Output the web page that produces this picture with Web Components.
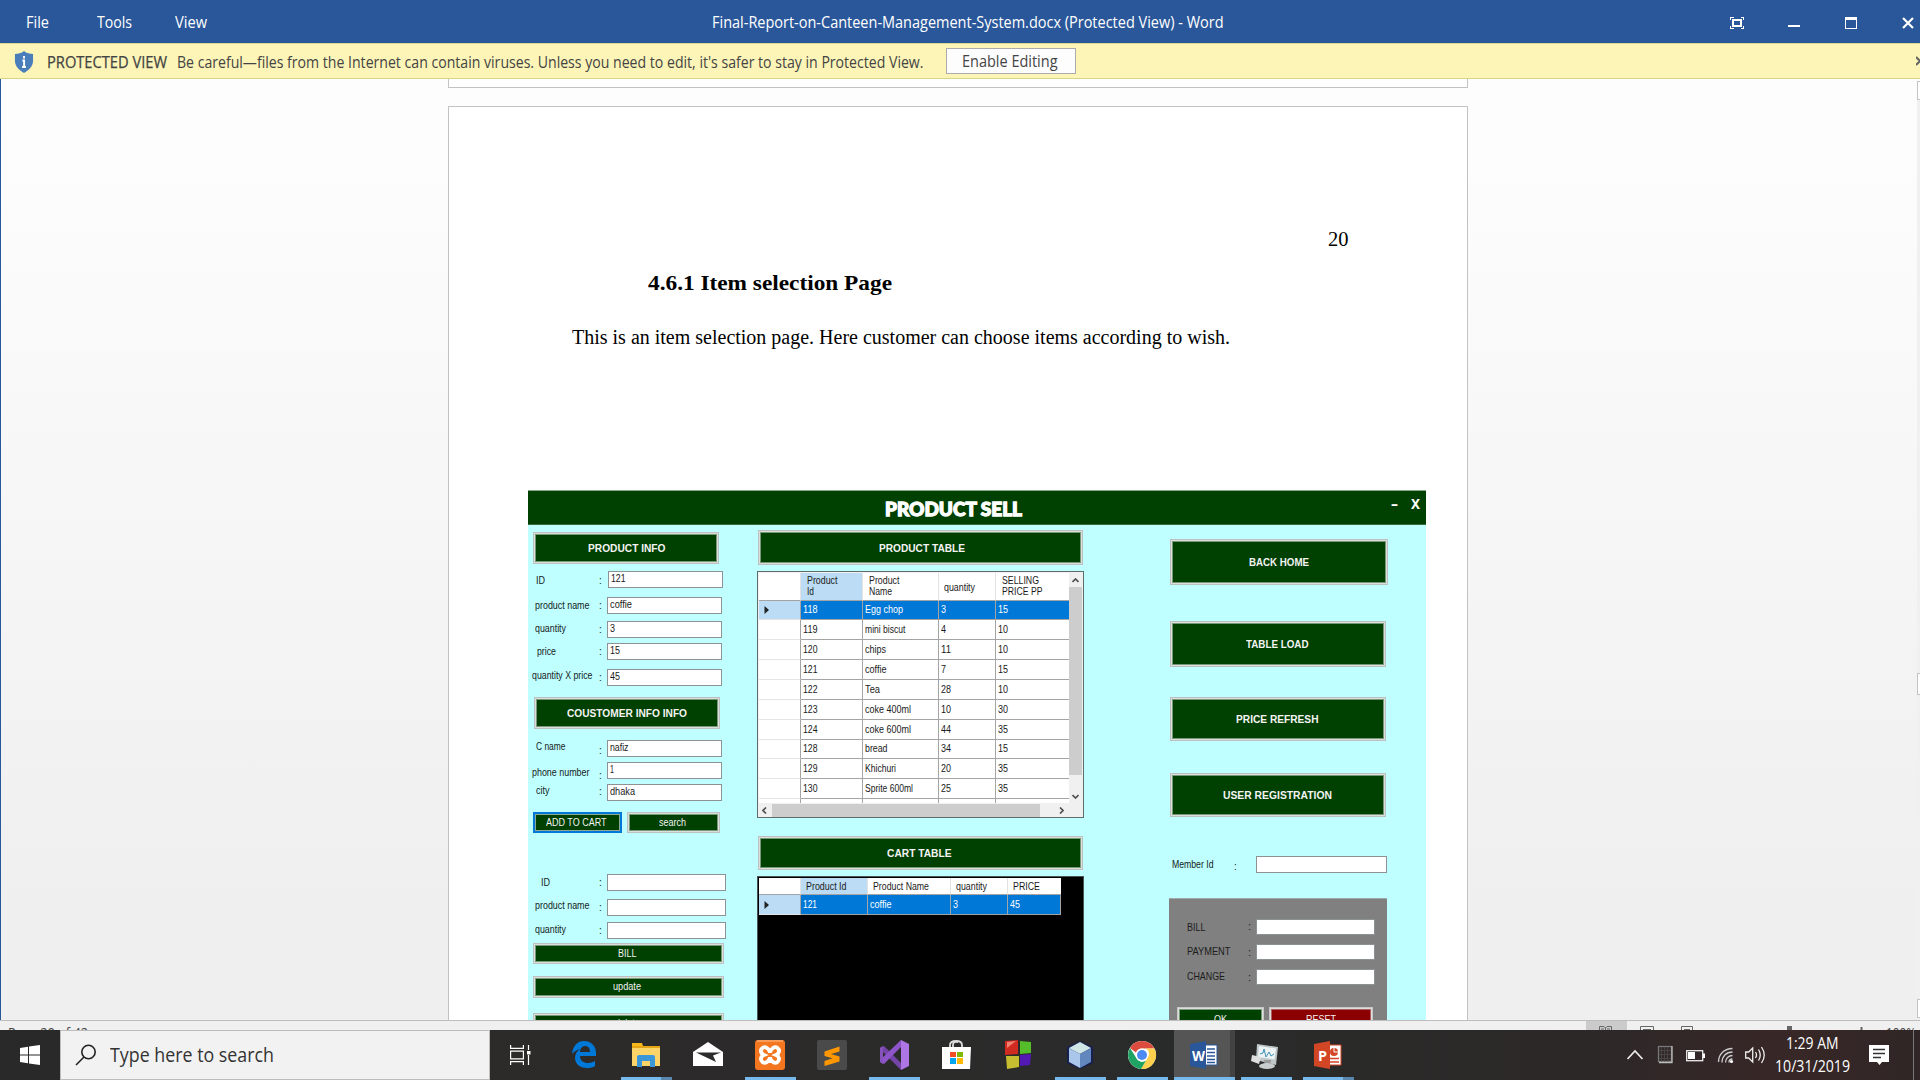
<!DOCTYPE html>
<html lang="en">
<head>
<meta charset="utf-8">
<title>Word</title>
<style>
html,body{margin:0;padding:0;width:1920px;height:1080px;overflow:hidden;background:#f0f0f0}
</style>
</head>
<body>
<desktop-screen></desktop-screen>
<script>
const define=(name,css,html,after)=>customElements.define(name,class extends HTMLElement{
  connectedCallback(){
    if(this.shadowRoot)return;
    const r=this.attachShadow({mode:'open'});
    r.innerHTML='<style>*{box-sizing:border-box}:host{display:block;box-sizing:border-box}'+css+'</style>'+(typeof html==='function'?html(this):html);
    if(after)after(this,r);
  }
});
const at=(e,n,d='')=>e.hasAttribute(n)?e.getAttribute(n):d;
const T=(t,w,s='')=>`<fit-text w="${w}" t="${t}" style="${s}"></fit-text>`;

/* One line of text condensed or widened to a set advance */
define('fit-text',':host{display:block;white-space:nowrap;flex:none}span{display:inline-block;transform-origin:0 50%;white-space:pre}',
  e=>`<span>${at(e,'t')}</span>`,
  (e,r)=>{const w=+at(e,'w');e.style.width=w+'px';const s=r.querySelector('span');const n=s.offsetWidth?s.getBoundingClientRect().width:w;s.style.transform=`scaleX(${w/n})`;});

define('title-bar',`
:host{height:43px;background:#2a579a;color:#fff;font:16px/44px "Open Sans",sans-serif;flex:none}
.bar{display:flex;height:43px;align-items:center;padding-left:26px;overflow:hidden}
svg{display:block;flex:none;margin-left:auto}`,
`<div class="bar">${T('File',23)}${T('Tools',35,'margin-left:48px')}${T('View',32,'margin-left:43px')}
${T('Final-Report-on-Canteen-Management-System.docx (Protected View) - Word',511.5,'margin-left:505px')}
<svg width="192" height="43" viewBox="1728 0 192 43" fill="none" stroke="#fff" shape-rendering="crispEdges">
<path d="M1730.5 20v-2.500h3M1740.500 17.500h3v2.500M1743.500 26v2.500h-3M1733.500 28.500h-3v-2.500"/><rect x="1733" y="20" width="8" height="6" stroke-width="2"/>
<path d="M1788 26h12" stroke-width="2"/><path d="M1845.500 18v10.500h11V18"/><path d="M1845 18.500h12" stroke-width="3"/>
<path d="M1903 18l10 10M1913 18l-10 10" stroke-width="2.200" shape-rendering="auto"/></svg></div>`);

define('protected-bar',`
:host{height:36px;background:#fcf5b7;border-top:1px solid #dcd78e;border-bottom:1px solid #d6d686;color:#444;font:16px/34px "Open Sans",sans-serif;flex:none;overflow:hidden}
.r{display:flex;align-items:center;height:34px;padding-left:14px}
.r>fit-text{transform:translateY(.5px)}
button{margin:0 0 0 23px;width:130px;height:26px;border:1px solid #ababab;background:#fdfdfd;padding:0 0 0 15px;font:inherit;line-height:24px;color:#444}
.shield{flex:none;display:block;margin-top:2px}.x{margin-left:auto;flex:none}`,
`<div class="r"><svg class="shield" width="20" height="22" viewBox="0 0 21 22" preserveAspectRatio="none"><path d="M10.500 0C8 2.200 4 3 1 3v7c0 5 4 9 9.500 12C16 19 20 15 20 10V3C17 3 13 2.200 10.500 0z" fill="#4a7ebb"/><path d="M10.500 5v2.600M8.800 9.500h1.800v6.500M8.500 16h4" stroke="#fff" stroke-width="2" fill="none"/></svg>
${T('PROTECTED VIEW',120,'margin-left:13px;-webkit-text-stroke:.25px #444')}
${T("Be careful—files from the Internet can contain viruses. Unless you need to edit, it's safer to stay in Protected View.",746.5,'margin-left:10px;margin-right:-.5px')}
<button>${T('Enable Editing',95.5)}</button>
<svg class="x" width="4" height="10" viewBox="0 0 4 10"><path d="M0 1l8 8M0 9l8-8" stroke="#666" stroke-width="2.200"/></svg></div>`);

/* WinForms style button */
define('win-button',`
:host{flex:none;width:var(--w);height:var(--h);margin-top:var(--mt,0);background:var(--bg,#004000);border:1px solid var(--edge,#bcc0bf);box-shadow:inset 0 0 0 1px var(--edge2,#dcdedc),inset 0 0 0 2px var(--edge3,#78987a);color:#f4f4f4;display:flex;align-items:center;justify-content:center;font:10px/14px "Liberation Sans",sans-serif;overflow:hidden}
:host([b]){font-weight:bold}`,e=>T(at(e,'t'),at(e,'tw'),`position:relative;top:${at(e,'dy',e.hasAttribute('b')?1:0)}px;left:${at(e,'dx',e.hasAttribute('b')?-.5:-1.5)}px`));

/* Label, colon and text box in one line */
define('field-row',`
:host{display:flex;height:var(--h,17px);margin-top:var(--mt);flex:none;align-items:center;font:10px/14px "Liberation Sans",sans-serif;color:#142222}
.l{width:var(--lab,71px);padding-left:var(--lx);flex:none}
.c{width:var(--col,8px);flex:none}
.l fit-text{transform:translateY(var(--ly,0))}
.c span{display:block;transform:translateY(var(--cy,0))}
.i{width:var(--iw,115px);height:100%;background:#fff;border:1px solid var(--ib,#8d9394);padding-left:2px;display:flex;align-items:center;color:#1a1a1a}`,
e=>`<div class="l">${T(at(e,'l'),at(e,'lw'))}</div><div class="c"><span>:</span></div><div class="i">${at(e,'v')?T(at(e,'v'),at(e,'vw'),'margin-top:-1px;margin-left:-.5px'):''}</div>`);

define('left-column',`:host{width:229px;padding-left:5px;display:flex;flex-direction:column;flex:none}
field-row{margin-left:-5px}.two{display:flex;gap:5px;margin-top:11px}`,
`<win-button b t="PRODUCT INFO" tw="77.500" dx="1" style="--w:186px;--h:32px;--mt:7px"></win-button>
<field-row l="ID" lw="9" v="121" vw="14.500" style="--mt:7px;--lx:8px;--ly:1px;--cy:1px;--col:9px"></field-row>
<field-row l="product name" lw="54.500" v="coffie" vw="22" style="--mt:9px;--lx:6.500px"></field-row>
<field-row l="quantity" lw="31" v="3" vw="5" style="--mt:7px;--lx:7px;--ly:-1px"></field-row>
<field-row l="price" lw="19" v="15" vw="10" style="--mt:5px;--lx:9px"></field-row>
<field-row l="quantity X price" lw="60.500" v="45" vw="10" style="--mt:9px;--lx:4px;--ly:-2px"></field-row>
<win-button b t="COUSTOMER INFO INFO" tw="120" style="--w:186px;--h:32px;--mt:11px;margin-left:1px"></win-button>
<field-row l="C name" lw="29.500" v="nafiz" vw="18.500" style="--mt:11px;--lx:8px;--ly:-2px;--cy:2px"></field-row>
<field-row l="phone number" lw="57.500" v="1" vw="4" style="--mt:5px;--lx:4px;--ly:1.500px;--cy:5px"></field-row>
<field-row l="city" lw="13.500" v="dhaka" vw="25" style="--mt:5px;--lx:8px;--ly:-2px;--cy:-1px"></field-row>
<div class="two"><win-button t="ADD TO CART" tw="60.500" style="--w:89px;--h:21px;--edge:#0078d7;--edge2:#0078d7;--edge3:#8fa894"></win-button><win-button t="search" tw="27" style="--w:93px;--h:21px"></win-button></div>
<field-row l="ID" lw="9" style="--mt:41px;--lx:13px;--iw:119px"></field-row>
<field-row l="product name" lw="54.500" style="--mt:8px;--lx:7px;--iw:119px;--ly:-2px"></field-row>
<field-row l="quantity" lw="31" style="--mt:6px;--lx:7px;--iw:119px;--ly:-1px"></field-row>
<win-button t="BILL" tw="18.500" style="--w:191px;--h:21px;--mt:4px"></win-button>
<win-button t="update" tw="28" style="--w:191px;--h:22px;--mt:12px"></win-button>
<win-button t="delete" tw="25" style="--w:191px;--h:22px;--mt:15px"></win-button>`);

const gridCss=`
.hd,.row{display:grid}
.hd>div,.row>div{overflow:hidden}
.hd{background:#fff}.hd>div{border-right:1px solid #e2e2e2;border-bottom:1px solid #a4a4a4;display:flex;flex-direction:column;justify-content:center}
.hd>div:nth-child(2){background:#bbdcf4}
.hd>div:last-child{border-right:0}
.row>div{border-right:1px solid #a4a4a4;border-bottom:1px solid #a4a4a4;display:flex;align-items:center;padding-left:2px;background:#fff}
.row>div:first-child{border-bottom-color:#e6e6e6;padding-left:5px}
.sel>div{background:#0078d7;color:#fff}.sel>div:first-child{background:#bbdcf4}`;
const tri='<svg width="5" height="8" viewBox="0 0 5 8"><path d="M.5 0L5 4L.5 8z" fill="#222"/></svg>';

define('product-grid',gridCss+`
:host{width:327px;height:247px;border:1px solid #5e6c6c;outline:0;margin-top:6px;background:#f0f0f0;font:10px/11px "Liberation Sans",sans-serif;color:#1a1a1a;flex:none;padding:1px;overflow:hidden}
.main{display:flex;height:230px}.tbl{width:311px;overflow:hidden;background:#fff}
.hd{grid-template-columns:42px 62px 76px 57px 74px;height:27.500px}
.row{grid-template-columns:42px 62px 76px 57px 74px;height:19.87px}
.row>div:last-child{border-right:0}
.v{width:13px;display:flex;flex-direction:column;align-items:center;margin-left:0}
.v i{display:block;width:13px;height:188px;background:#cdcdcd;margin-top:4px;flex:none}
.v svg{margin-top:5px}.v i+svg{margin-top:19px}
.h{display:flex;align-items:center;height:14px;padding-left:3px}
.h i{width:268px;height:13px;background:#cdcdcd;margin:0 19px 0 5px}
svg{flex:none;display:block}`,()=>{
  const rows=[['118','Egg chop',38,'3','15'],['119','mini biscut',40.5,'4','10'],['120','chips',21,'11','10'],['121','coffie',21.5,'7','15'],['122','Tea',15,'28','10'],['123','coke 400ml',46,'10','30'],['124','coke 600ml',46,'44','35'],['128','bread',22.5,'34','15'],['129','Khichuri',31,'20','35'],['130','Sprite 600ml',48,'25','35']];
  const ch=(d,w,h)=>`<svg width="${w}" height="${h}" viewBox="0 0 ${w} ${h}"><path d="${d}" stroke="#505050" stroke-width="1.700" fill="none"/></svg>`;
  return `<div class="main"><div class="tbl"><div class="hd"><div></div><div>${T('Product',30.5,'margin-left:5.5px')}${T('Id',7,'margin-left:5.5px')}</div><div>${T('Product',30.5,'margin-left:5.5px')}${T('Name',23,'margin-left:5.5px')}</div><div>${T('quantity',31,'margin-left:5px;padding-top:2px')}</div><div>${T('SELLING',37,'margin-left:5.5px')}${T('PRICE PP',40.5,'margin-left:5.5px')}</div></div>`+
  rows.map((r,i)=>`<div class="row ${i?'':'sel'}"><div>${i?'':tri}</div><div>${T(r[0],14.5)}</div><div>${T(r[1],r[2])}</div><div>${T(r[3],r[3].length>1?10:5)}</div><div>${T(r[4],10)}</div></div>`).join('')+
  `<div class="row"><div></div><div></div><div></div><div></div><div></div></div></div>
  <div class="v">${ch('M.5 4L3.500 1L6.500 4',7,5)}<i></i>${ch('M.5 1L3.500 4L6.500 1',7,5)}</div></div>
  <div class="h">${ch('M4 .5L1 3.500L4 6.500',5,7)}<i></i>${ch('M1 .5L4 3.500L1 6.500',5,7)}</div>`;});

define('cart-grid',gridCss+`
:host{width:327px;height:200px;border:1px solid #4a5656;background:#000;margin-top:6px;font:10px/11px "Liberation Sans",sans-serif;color:#1a1a1a;flex:none;padding-top:1px;padding-left:1px}
.hd{grid-template-columns:42px 67px 83px 57px 53px;width:302px;height:17px}
.row{grid-template-columns:42px 67px 83px 57px 53px;width:302px;height:20px}`,
`<div class="hd"><div></div><div>${T('Product Id',40.5,'margin-left:5px')}</div><div>${T('Product Name',56,'margin-left:5px')}</div><div>${T('quantity',31,'margin-left:5px')}</div><div>${T('PRICE',27,'margin-left:5px')}</div></div>
<div class="row sel"><div>${tri}</div><div>${T('121',14)}</div><div>${T('coffie',21.5)}</div><div>${T('3',5)}</div><div>${T('45',10)}</div></div>`);

define('middle-column',`:host{width:412px;display:flex;flex-direction:column;flex:none}win-button{margin-left:1px}`,
`<win-button b t="PRODUCT TABLE" tw="86" dx="1.5" style="--w:325px;--h:35px;--mt:5px"></win-button>
<product-grid></product-grid>
<win-button b t="CART TABLE" tw="64.500" dx="-1" style="--w:325px;--h:34px;--mt:18px"></win-button>
<cart-grid></cart-grid>`);

define('pay-panel',`:host{width:218px;height:200px;margin-top:25px;background:#808080;display:flex;flex-direction:column;flex:none;border-top:1px solid #a0a8a8}
field-row{color:#1c1c1c;font-size:11px}.b{display:flex;gap:5px;margin:22px 0 0 8px}`,
`<field-row l="BILL" lw="18.500" style="--mt:20px;--lab:79px;--lx:18px;--h:16px;--iw:119px;--cy:-1px"></field-row>
<field-row l="PAYMENT" lw="43.500" style="--mt:9px;--lab:79px;--lx:18px;--h:16px;--iw:119px;--ly:-1px"></field-row>
<field-row l="CHANGE" lw="38" style="--mt:9px;--lab:79px;--lx:17.500px;--h:16px;--iw:119px;--ly:-1px"></field-row>
<div class="b"><win-button t="OK" tw="13" dx="-.5" dy="1" style="--w:87px;--h:24px;--edge:#c8c8c8"></win-button><win-button t="RESET" tw="30" dx="-.5" dy="1" style="--w:104px;--h:24px;--bg:#8b0000;--edge:#c8c8c8;--edge3:#b06060"></win-button></div>`);

define('right-column',`:host{width:257px;display:flex;flex-direction:column;flex:none}win-button{margin-left:1px}`,
`<win-button b t="BACK HOME" tw="60" style="--w:218px;--h:46px;--mt:14px"></win-button>
<win-button b t="TABLE LOAD" tw="62.500" style="--w:216px;--h:46px;--mt:36px"></win-button>
<win-button b t="PRICE REFRESH" tw="82.500" style="--w:216px;--h:44px;--mt:30px"></win-button>
<win-button b t="USER REGISTRATION" tw="109" style="--w:216px;--h:44px;--mt:32px"></win-button>
<field-row l="Member Id" lw="41.500" style="--mt:39px;--lab:65px;--lx:3px;--col:22px;--iw:131px;--cy:1.500px"></field-row>
<pay-panel></pay-panel>`);

define('sell-form',`
:host{width:898px;margin:0 0 0 79px;background:#c0ffff}
header{height:35px;background:#004000;border-top:1px solid #8aa88a;border-bottom:1px solid #3c6a3c;display:flex;color:#fff;padding-left:357px;align-items:center}
.t{font:900 19px/24px Lato,sans-serif;-webkit-text-stroke:1.300px #fff;margin-top:3px}
.w{font:bold 14px/16px "Noto Sans",sans-serif;display:flex;gap:13px;margin:-8px 6px 0 auto}
main{display:flex}`,
`<header><div class="t">${T('PRODUCT SELL',137)}</div><div class="w">${T('-',7)}${T('X',9)}</div></header>
<main><left-column></left-column><middle-column></middle-column><right-column></right-column></main>`);

define('doc-page',`
:host{width:1020px;height:1200px;border:1px solid #c3c3c3;background:#fff;color:#000;font:20px/24px "Liberation Serif",serif;flex:none}
.n{padding:120px 0 0 879px}.h{font-weight:bold;font-size:22px;padding:20px 0 0 199px}.p{padding:30px 0 0 123px;height:195px}`,
`<div class="n">${T('20',20.5)}</div><div class="h">${T('4.6.1 Item selection Page',244)}</div><div class="p">${T('This is an item selection page. Here customer can choose items according to wish.',658)}</div><sell-form></sell-form>`);

define('doc-area',`
:host{height:941px;overflow:hidden;background:linear-gradient(#fdfdfd,#fcfcfc 12%,#efefef 88%,#efefef);border-left:1px solid #2a579a;display:flex;justify-content:space-between;flex:none}
.col{margin-left:447px;display:flex;flex-direction:column;gap:18px}
.prev{width:1020px;height:9px;border:1px solid #c3c3c3;border-top:0;background:#fff;flex:none}
.sb{width:3px;background:#f0f0f0;margin-top:2px;display:flex;flex-direction:column}
.sb i{display:block;border:1px solid #c3c3c3;border-right:0;background:#fff}`,
`<div class="col"><div class="prev"></div><doc-page></doc-page></div><div class="sb"><i style="height:19px"></i><i style="height:22px;margin-top:573px"></i><i style="height:19px;margin-top:304px"></i></div>`);

define('status-bar',`
:host{height:10px;background:#f0f0f0;border-top:1px solid #bdbdbd;overflow:hidden;display:flex;color:#444;font:14px/20px "Open Sans",sans-serif;flex:none;padding-left:8px}
fit-text{margin-top:2px}svg{margin-left:auto;flex:none;display:block}`,
`${T('Page 20 of 42',80)}
<svg width="300" height="9" viewBox="1586 1021 300 9" fill="none" stroke="#666"><path d="M1586 1021h41v9h-41z" fill="#cbcbcb" stroke="none"/><path d="M1599.500 1031v-4.500h4.500l1.500 1.500l1.500-1.500h4.500v4.500M1605.500 1028v4M1601 1029h3M1607 1029h3"/><path d="M1640.500 1031v-4.500h13v4.500M1643 1029.500h8M1681.500 1031v-4.500h11v4.500M1684 1029.500h6"/><path d="M1787 1026h5v4h-5z" fill="#666" stroke="none"/><path d="M1861.500 1027v4" stroke-width="2"/></svg>${T('100%',30,'margin-right:4px')}`);

const I={
edge:'<path d="M3 14C4 5 9 1 15 1c8 0 12 6 12 12v3H11c0 5 4 7 8 7 3 0 5-1 7-2v5c-2 1.500-5 2-8 2-8 0-12-5-12-10 0-4 2-7 5-9-4 1-6 3-8 5zM11 12h10c0-4-2-6-5-6s-5 3-5 6z" fill="#0078d7"/>',
folder:'<path d="M1 4h9l2 2h17v20H1z" fill="#e6a417"/><path d="M1 3h10l1 3H1z" fill="#f6b71c"/><path d="M1 8h28v18H1z" fill="#fdd467"/><path d="M6 27V17q0-2 2-2h14q2 0 2 2v10h-5v-6h-8v6z" fill="#3c97d8"/>',
mail:'<path d="M0 12L15 2l15 10v14H0z" fill="#fff"/><path d="M3 12.500h25L20 15.500 23 22z" fill="#2b2b2b"/>',
xampp:'<rect width="30" height="30" rx="3" fill="#f4771f"/><path d="M2 1h26" stroke="#ffc293"/><path d="M15 12.500C14 8 10 6 7.500 8s-2 5.500 1.500 7c-3.500 1.500-4 5-1.500 7s6.500 0 7.500-4.500C16 22 20 24 22.500 22s2-5.500-1.500-7c3.500-1.500 4-5 1.500-7S16 8 15 12.500z" fill="none" stroke="#fff" stroke-width="3.800"/>',
sublime:'<rect width="30" height="30" rx="2" fill="#4a4a4a"/><path d="M7.500 11.500L22.500 6.500v5L14 14l8.500 2.600v5L7.500 26v-5l8-2.700-8-2.300z" fill="#ff9800"/>',
vs:'<path d="M1 8l4-2 17 17v7L2 10z" fill="#7544a8"/><path d="M1 22l4 2L22 7V0L1 20z" fill="#8d55c9"/><path d="M1 8v14l3 2V6z" fill="#8652bb"/><path d="M22 0v30l8-4V4z" fill="#ae76e5"/>',
store:'<path d="M9 9V5q0-4 6-4t6 4v4M12 9V5q0-4 5-3" fill="none" stroke="#ddd" stroke-width="1.800"/><path d="M1 7h29l-1 22H1z" fill="#fff"/><path d="M9 12h6v5H9z" fill="#f25022"/><path d="M16 12h6v5h-6z" fill="#7fba00"/><path d="M9 18h6v6H9z" fill="#00a4ef"/><path d="M16 18h6v6h-6z" fill="#ffb900"/>',
blocks:'<path d="M2 1l13-1v14L2 15z" fill="#d02b20"/><path d="M17 1l11 1v11l-11 1z" fill="#56bd2a"/><path d="M3 16h13v11L4 29z" fill="#c7bd31"/><path d="M17 15l11-1-1 11-10 1z" fill="#5419b2"/><path d="M4 2l9-1-9 7z" fill="#f08070"/>',
cube:'<path d="M15 1l13 6v16l-13 6-13-6V7z" fill="#17204f"/><path d="M15 2l11 6-11 6L4 8z" fill="#d0e5e5"/><path d="M4 8l11 6v14L4 22z" fill="#aac6ea"/><path d="M26 8l-11 6v14l11-6z" fill="#6287bf"/>',
chrome:'<circle cx="15" cy="15" r="14" fill="#fff"/><path d="M15 1a14 14 0 0 1 12.400 7.500H15a6.500 6.500 0 0 0-6 4L3 8A14 14 0 0 1 15 1z" fill="#dd4b3e"/><path d="M27.400 8.500A14 14 0 0 1 14 29l6-10.500a6.500 6.500 0 0 0-1-10z" fill="#fdd04e"/><path d="M3 8a14 14 0 0 0 11 21l5-8.500A6.500 6.500 0 0 1 9 17.500z" fill="#1ea362"/><circle cx="15" cy="15" r="6.500" fill="#fff"/><circle cx="15" cy="15" r="5" fill="#4c8bf5"/>',
word:'<path d="M16 5h12v20H16z" fill="#fff" stroke="#2a579a"/><path d="M18 9h8M18 12.500h8M18 16h8M18 19.500h8M18 22.500h8" stroke="#2a579a" stroke-width="1.500"/><path d="M1 4l16-3v28L1 26z" fill="#2a579a"/>',
mon:'<path d="M6 4l21 3-2 18-20-5z" fill="#bfc6c7"/><path d="M8 6l17 2.500-1.500 11L7 17z" fill="#edf3f5"/><path d="M9 14l3-1 1-4 2 8 3-5 2 4 3-2" fill="none" stroke="#3c91b5"/><path d="M1 15l9 2-2 7-8-3z" fill="#dedede"/><path d="M13 20h7l-1 6h-5z" fill="#999"/><ellipse cx="16" cy="26" rx="8" ry="3" fill="#c8cccc"/>',
ppt:'<path d="M16 5h12v20H16z" fill="#fff" stroke="#d24625"/><circle cx="21" cy="12" r="4" fill="#d24625"/><path d="M21 12V7.500M21 12h4.500" stroke="#fff"/><path d="M17 18.500h9M17 22h9" stroke="#d24625" stroke-width="1.700"/><path d="M1 4l16-3v28L1 26z" fill="#d24625"/>'};

define('task-icon',`
:host{width:62px;height:50px;display:flex;flex-direction:column;align-items:center;padding-top:10px;flex:none}
:host([active]){background:linear-gradient(90deg,transparent 1px,#555 1px 57px,#424242 57px)}
svg{display:block;flex:none}
.g{display:grid;width:30px;height:30px}.g>*{grid-area:1/1}
b{font:bold 15px/30px "Open Sans",sans-serif;color:#fff;width:16px;text-align:center;margin-left:1px}
.u{width:51px;height:3px;margin-top:7px;background:#76b9ed}
:host([active]) .u{width:61px;margin-left:1px}
:host([multi]) .u{background:linear-gradient(90deg,#76b9ed 40px,#5987ad 40px)}`,
e=>`<div class="g"><svg width="30" height="30" viewBox="0 0 30 30">${I[at(e,'i')]}</svg>${at(e,'c')?`<b>${T(at(e,'c'),at(e,'c')=='W'?13:9,'margin:0 auto')}</b>`:''}</div>${e.hasAttribute('run')?'<div class="u"></div>':''}`);

define('task-bar',`
:host{height:50px;display:flex;background:linear-gradient(90deg,#292929,#2d2a2a 30%,#292b2a 62%,#2c2828 82%,#382727 93%,#302626);color:#fff;font:17px/23px "Open Sans",sans-serif;flex:none}
.st{width:60px;padding:15px 0 0 20px}.se{width:430px;height:50px;background:#f2f2f2;border:1px solid #bdbdbd;color:#333;display:flex;align-items:center;padding-left:14px;font-size:20px;line-height:24px;flex:none}
.tv{width:63px;padding:15px 0 0 20px}svg{display:block;flex:none}
.tray{margin-left:auto;display:flex;flex:none;align-items:flex-start}
.clk{width:75px;margin:2px 0 0 8px;font-size:16px;line-height:23px}.clk fit-text:first-child{margin-left:11px}
.end{width:1px;height:50px;background:#777;margin:0 6px 0 24px}`,
`<div class="st"><svg width="20" height="20" viewBox="0 0 20 20" fill="#fff"><path d="M0 3l8-1.200V9.500H0zM9 1.600L20 0v9.500H9zM0 10.500h8v7.700L0 17zM9 10.500h11V20L9 18.400z"/></svg></div>
<div class="se"><svg width="22" height="22" viewBox="0 0 22 22" fill="none" stroke="#222" stroke-width="1.600"><circle cx="13.500" cy="8" r="6.700"/><path d="M9 13l-8 8"/></svg>${T('Type here to search',164,'margin-left:13px')}</div>
<div class="tv"><svg width="21" height="20" viewBox="0 0 21 20" fill="none" stroke="#fff" stroke-width="1.200"><path d="M.6 0v3.400h12.800V0M.6 6.100h12.800v7.800H.6zM.6 20v-3.400h12.800V20M18.500 0v5M18.500 10v10"/><path d="M17 6h3.500v3.500H17z" fill="#fff" stroke="none"/></svg></div>
<task-icon i="edge"></task-icon><task-icon i="folder" run multi></task-icon><task-icon i="mail"></task-icon><task-icon i="xampp" run></task-icon><task-icon i="sublime"></task-icon><task-icon i="vs" run></task-icon><task-icon i="store"></task-icon><task-icon i="blocks"></task-icon><task-icon i="cube" run></task-icon><task-icon i="chrome" run></task-icon><task-icon i="word" c="W" run active></task-icon><task-icon i="mon" run></task-icon><task-icon i="ppt" c="P" run multi></task-icon>
<div class="tray"><svg width="141" height="50" viewBox="1626 1030 141 50" fill="none" stroke="#eee" stroke-width="1.300">
<path d="M1627.500 1059l7.500-8 7.500 8" stroke-width="1.700"/>
<rect x="1658.500" y="1046.500" width="13" height="15" stroke="#777"/><path d="M1661.500 1047v15M1664.500 1047v15M1667.500 1047v15M1659 1050.500h12M1659 1054.500h12M1659 1058.500h12" stroke="#484444" stroke-width="1"/><path d="M1672 1046v16.500h-13" stroke="#bbb"/>
<rect x="1686.700" y="1050.700" width="16" height="10"/><path d="M1688 1052h7v7h-7zM1703 1053.500h2v4.500h-2z" fill="#fff" stroke="none"/>
<path d="M1718.500 1062c0-8 6-13.500 14-13.500M1722 1062.500c0-6 4-10.500 10.500-10.500M1725.500 1062.500c0-4 3-7 7-7M1729 1062.500c0-2 1.500-3.500 3.500-3.500" stroke="#ccc"/><circle cx="1731.500" cy="1061.500" r="1.600" fill="#fff" stroke="none"/>
<path d="M1745.700 1052h3l4-4v14l-4-4h-3zM1755.500 1052q2 3 0 6M1758.500 1049.500q3.500 5.500 0 11M1761.500 1047q5.500 8 0 16"/></svg>
<div class="clk">${T('1:29 AM',52.5)}${T('10/31/2019',75)}</div>
<svg width="20" height="50" viewBox="1869 1030 20 50" style="margin-left:19px"><path d="M1869 1045h20v17h-7l-2.500 3-2.500-3h-8z" fill="#fff"/><path d="M1873 1049.500h12M1873 1053.500h12M1873 1057.500h8" stroke="#333" stroke-width="1.300"/></svg>
<div class="end"></div></div>`);

define('desktop-screen',`:host{width:1920px;height:1080px;display:flex;flex-direction:column;overflow:hidden}`,
'<title-bar></title-bar><protected-bar></protected-bar><doc-area></doc-area><status-bar></status-bar><task-bar></task-bar>');
</script>
</body>
</html>
